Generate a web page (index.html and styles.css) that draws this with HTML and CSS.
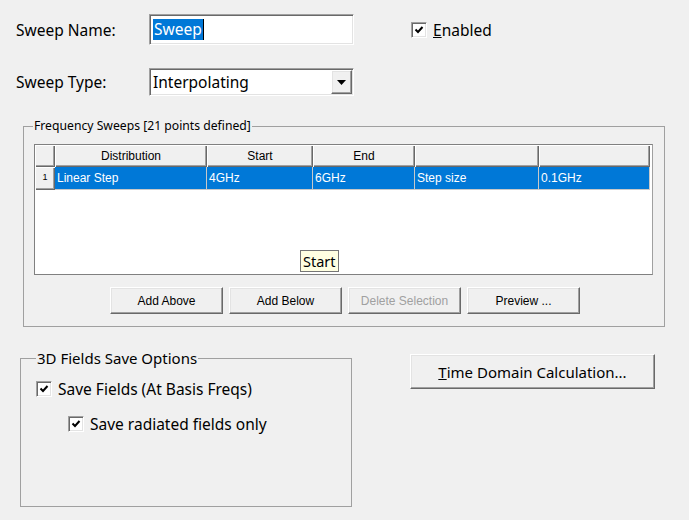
FILE: index.html
```html
<!DOCTYPE html>
<html lang="en">
<head>
  <meta charset="UTF-8">
  <title>Edit Frequency Sweep</title>
  <link rel="stylesheet" href="styles.css">
</head>
<body>
  <div class="dlg">
    <!-- name row -->
    <div class="row row-name">
      <span class="lbl">Sweep Name:</span>
      <div class="edit sunken"><span class="sel">Sweep</span><span class="caret"></span></div>
      <label class="chk chk-enabled">
        <span class="box sunken"><svg width="10" height="10" viewBox="0 0 10 10"><polyline points="1.5,4.5 4,7 8.5,2" fill="none" stroke="#000" stroke-width="2"/></svg></span>
        <span><u>E</u>nabled</span>
      </label>
    </div>

    <!-- type row -->
    <div class="row row-type">
      <span class="lbl">Sweep Type:</span>
      <div class="combo sunken">
        <span class="combo-text">Interpolating</span>
        <span class="combo-btn raised"><svg width="9" height="5" viewBox="0 0 9 5"><polygon points="0,0 9,0 4.5,5" fill="#000"/></svg></span>
      </div>
    </div>

    <fieldset class="group sweeps">
      <legend>Frequency Sweeps [21 points defined]</legend>
      <div class="grid">
        <div class="gh corner"></div>
        <div class="gh">Distribution</div>
        <div class="gh">Start</div>
        <div class="gh">End</div>
        <div class="gh"></div>
        <div class="gh"></div>

        <div class="gh rowno">1</div>
        <div class="gc">Linear Step</div>
        <div class="gc">4GHz</div>
        <div class="gc">6GHz</div>
        <div class="gc">Step size</div>
        <div class="gc">0.1GHz</div>

        <div class="tip">Start</div>
      </div>
      <div class="btns">
        <button class="btn raised">Add Above</button>
        <button class="btn raised">Add Below</button>
        <button class="btn raised" disabled>Delete Selection</button>
        <button class="btn raised">Preview ...</button>
      </div>
    </fieldset>

    <div class="bottom">
      <fieldset class="group fields">
        <legend>3D Fields Save Options</legend>
        <label class="chk">
          <span class="box sunken"><svg width="10" height="10" viewBox="0 0 10 10"><polyline points="1.5,4.5 4,7 8.5,2" fill="none" stroke="#000" stroke-width="2"/></svg></span>
          <span>Save Fields (At Basis Freqs)</span>
        </label>
        <label class="chk chk-sub">
          <span class="box sunken"><svg width="10" height="10" viewBox="0 0 10 10"><polyline points="1.5,4.5 4,7 8.5,2" fill="none" stroke="#000" stroke-width="2"/></svg></span>
          <span>Save radiated fields only</span>
        </label>
      </fieldset>
      <button class="btn-big raised"><u>T</u>ime Domain Calculation...</button>
    </div>
  </div>
</body>
</html>
```

FILE: styles.css
```css
/* base */
body {
  margin: 0;
  background: #f0f0f0;
  color: #000;
  font-family: "Noto Sans", "Open Sans", sans-serif;
  font-size: 15.5px;
  overflow: hidden;
}

.dlg {
  width: 689px;
  height: 520px;
  padding-top: 14px;
  box-sizing: border-box;
}

/* 3d borders */
.sunken {
  border: 1px solid;
  border-color: #a0a0a0 #fff #fff #a0a0a0;
  box-shadow: inset 1px 1px #696969, inset -1px -1px #e3e3e3;
}

.raised {
  border: 1px solid;
  border-color: #fff #696969 #696969 #fff;
  box-shadow: inset -1px -1px #a0a0a0, inset 1px 1px #e3e3e3;
}

/* top rows */
.row {
  display: flex;
  align-items: center;
  margin-left: 16px;
}

.lbl {
  width: 133px;
}

.row-name {
  height: 31px;
}

.edit {
  width: 205px;
  height: 31px;
  box-sizing: border-box;
  background: #fff;
  display: flex;
  align-items: center;
  padding-left: 3px;
}

.sel {
  background: #0078d7;
  color: #fff;
  line-height: 21px;
  padding: 0 1px;
}

.caret {
  width: 1px;
  height: 21px;
  background: #000;
}

.chk {
  display: flex;
  align-items: center;
  gap: 6px;
}

.box {
  width: 16px;
  height: 16px;
  box-sizing: border-box;
  background: #fff;
  display: flex;
  align-items: center;
  justify-content: center;
}

.chk-enabled {
  margin-left: 57px;
}

.row-type {
  margin-top: 23px;
  height: 28px;
}

.combo {
  width: 205px;
  height: 28px;
  box-sizing: border-box;
  background: #fff;
  display: flex;
  align-items: center;
  padding: 1px 1px 1px 3px;
}

.combo-text {
  flex: 1;
}

.combo-btn {
  width: 21px;
  height: 24px;
  box-sizing: border-box;
  background: #f0f0f0;
  display: flex;
  align-items: center;
  justify-content: center;
}

/* group boxes */
.group {
  margin: 0;
  border: 1px solid #a0a0a0;
  box-sizing: border-box;
}

.group legend {
  padding: 0 1px;
  margin-left: 0;
}

.sweeps {
  margin: 22px 0 0 23px;
  width: 642px;
  padding: 10px 11px 12px 10px;
}

.sweeps legend {
  font-size: 12.2px;
  line-height: 16px;
  margin-left: -1px;
}

/* grid */
.grid {
  position: relative;
  display: grid;
  grid-template-columns: 20px 152px 106px 102px 124px 111px;
  grid-template-rows: 22px 23px;
  align-content: start;
  height: 131px;
  box-sizing: border-box;
  border: 1px solid #808080;
  border-right-color: #a0a0a0;
  background: #fff;
  font-family: "Liberation Sans", Arial, sans-serif;
  font-size: 12px;
}

.gh {
  background: #f0f0f0;
  box-shadow: inset 1px 1px #fff, inset -1px -1px #696969, inset -2px -2px #a0a0a0;
  display: flex;
  align-items: center;
  justify-content: center;
}

.rowno {
  font-size: 9px;
  align-items: flex-start;
  padding-top: 5px;
  box-sizing: border-box;
}

.gc {
  background: #0078d7;
  color: #fff;
  display: flex;
  align-items: center;
  padding-left: 2px;
  border-right: 1px solid #c8c8c8;
  border-bottom: 1px solid #c8c8c8;
  white-space: nowrap;
}

.tip {
  position: absolute;
  left: 265px;
  top: 105px;
  height: 22px;
  box-sizing: border-box;
  padding: 0 2px;
  border: 1px solid #767676;
  background: #ffffe1;
  font-family: "Noto Sans", "Open Sans", sans-serif;
  font-size: 14.5px;
  line-height: 20px;
}

.btns {
  display: flex;
  gap: 6px;
  margin-top: 12px;
  padding-left: 76px;
}

.btn {
  width: 113px;
  height: 27px;
  box-sizing: border-box;
  background: #f0f0f0;
  font-family: "Liberation Sans", Arial, sans-serif;
  font-size: 12px;
  color: #000;
  padding: 0;
}

.btn:disabled {
  color: #a0a0a0;
}

/* bottom area */
.bottom {
  display: flex;
  align-items: flex-start;
  margin-top: 21px;
}

.fields {
  margin-left: 20px;
  width: 332px;
  height: 159px;
  padding: 11px 10px 0 15px;
}

.fields legend {
  font-size: 15px;
  line-height: 20px;
  padding: 0 1px;
}

.fields .chk {
  height: 20px;
}

.chk-sub {
  margin: 15px 0 0 32px;
}

.btn-big {
  margin: 6px 0 0 58px;
  width: 245px;
  height: 35px;
  box-sizing: border-box;
  background: #f0f0f0;
  font-family: "Noto Sans", "Open Sans", sans-serif;
  font-size: 15px;
  color: #000;
  padding: 0;
}
```
